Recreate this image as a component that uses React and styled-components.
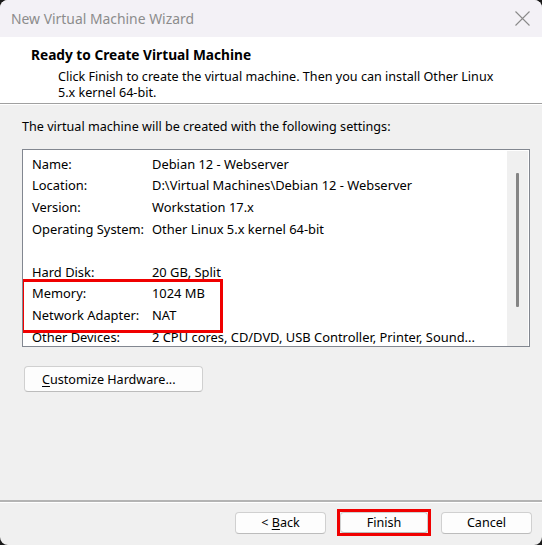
import React from "react";
import styled, { createGlobalStyle } from "styled-components";

const GlobalStyle = createGlobalStyle`
  html, body {
    margin: 0;
    padding: 0;
    background: #1a1a1a;
  }
  * {
    box-sizing: border-box;
  }
`;

const Window = styled.div`
  width: 542px;
  height: 545px;
  border-radius: 8px;
  overflow: hidden;
  background: #f0f0f0;
  display: flex;
  flex-direction: column;
  font-family: "Noto Sans", "Open Sans", sans-serif;
  font-size: 12.6px;
  color: #000;
`;

const TitleBar = styled.div`
  height: 37px;
  flex-shrink: 0;
  background: #f3f1f6;
  display: flex;
  align-items: center;
  justify-content: space-between;
  padding: 0 12px 1px 11px;
  color: #8c8c8c;
  font-size: 13.9px;
`;

const CloseIcon = styled.svg`
  width: 15px;
  height: 15px;
`;

const Header = styled.div`
  background: #fff;
  height: 67px;
  padding: 8px 20px 0 31px;
  border-bottom: 1px solid #a0a0a0;
  box-shadow: 0 1px 0 #fff;
`;

const HeaderTitle = styled.div`
  font-weight: bold;
  font-size: 13.7px;
  line-height: 20px;
`;

const HeaderText = styled.div`
  padding-left: 27px;
  line-height: 16px;
  margin-top: 4px;
`;

const Body = styled.div`
  flex: 1;
  padding: 13px 12px 0 22px;
`;

const Intro = styled.div`
  line-height: 20px;
`;

const ListBox = styled.div`
  margin-top: 12px;
  width: 508px;
  height: 198px;
  border: 1px solid #828790;
  background: #fff;
  display: flex;
`;

const Rows = styled.div`
  flex: 1;
  padding: 3px 0 0 9px;
  overflow: hidden;
  font-size: 12.9px;
`;

const Row = styled.div`
  display: flex;
  height: 21.6px;
  align-items: center;
  white-space: nowrap;
`;

const Label = styled.span`
  width: 120px;
  flex-shrink: 0;
`;

const Value = styled.span``;

const Highlight = styled.div`
  position: relative;
  &::after {
    content: "";
    position: absolute;
    left: -11px;
    top: -4px;
    width: 196px;
    height: 48px;
    border: 3px solid #f00000;
    pointer-events: none;
  }
`;

const ScrollTrack = styled.div`
  width: 21px;
  background: #f0f0f0;
  display: flex;
  justify-content: center;
  padding-top: 22px;
  margin-right: 1px;
  margin-top: 1px;
`;

const ScrollThumb = styled.div`
  width: 2.5px;
  height: 134px;
  background: #858585;
  border-radius: 1px;
`;

const Button = styled.button`
  font-family: inherit;
  font-size: inherit;
  color: #000;
  background: #fdfdfd;
  border: 1px solid #d0d0d0;
  border-bottom-color: #bcbcbc;
  border-radius: 4px;
  height: ${(p) => p.$h || 22}px;
  width: ${(p) => p.$w || 91}px;
  padding: 0;
  text-align: ${(p) => (p.$left ? "left" : "center")};
  padding-left: ${(p) => (p.$left ? "17px" : "0")};
`;

const Customize = styled.div`
  margin-top: 19px;
  margin-left: 2px;
`;

const Footer = styled.div`
  flex-shrink: 0;
  border-top: 2px solid #b4b4b4;
  box-shadow: inset 0 1px 0 #fff;
  padding: 7px 10px 9px 0;
  display: flex;
  justify-content: flex-end;
  align-items: center;
  gap: 6px;
`;

const Marked = styled.div`
  border: 3px solid #f00000;
  display: flex;
  margin: 0 4px 0 5px;
`;

const U = styled.span`
  text-decoration: underline;
  text-underline-offset: 2px;
`;

const settings = [
  ["Name:", "Debian 12 - Webserver"],
  ["Location:", "D:\\Virtual Machines\\Debian 12 - Webserver"],
  ["Version:", "Workstation 17.x"],
  ["Operating System:", "Other Linux 5.x kernel 64-bit"],
  ["", ""],
  ["Hard Disk:", "20 GB, Split"],
];

const marked = [
  ["Memory:", "1024 MB"],
  ["Network Adapter:", "NAT"],
];

const SettingRow = ({ label, value }) => (
  <Row>
    <Label>{label}</Label>
    <Value>{value}</Value>
  </Row>
);

const App = () => {
  return (
    <>
      <GlobalStyle />
      <Window>
        <TitleBar>
          <span>New Virtual Machine Wizard</span>
          <CloseIcon viewBox="0 0 15 15">
            <path d="M0.5 0.5 L14.5 14.5 M14.5 0.5 L0.5 14.5" stroke="#8a8a8a" strokeWidth="1.1" />
          </CloseIcon>
        </TitleBar>
        <Header>
          <HeaderTitle>Ready to Create Virtual Machine</HeaderTitle>
          <HeaderText>
            Click Finish to create the virtual machine. Then you can install Other Linux
            <br />
            5.x kernel 64-bit.
          </HeaderText>
        </Header>
        <Body>
          <Intro>The virtual machine will be created with the following settings:</Intro>
          <ListBox>
            <Rows>
              {settings.map(([l, v], i) => (
                <SettingRow key={i} label={l} value={v} />
              ))}
              <Highlight>
                {marked.map(([l, v]) => (
                  <SettingRow key={l} label={l} value={v} />
                ))}
              </Highlight>
              <SettingRow
                label="Other Devices:"
                value="2 CPU cores, CD/DVD, USB Controller, Printer, Sound..."
              />
            </Rows>
            <ScrollTrack>
              <ScrollThumb />
            </ScrollTrack>
          </ListBox>
          <Customize>
            <Button $w={179} $h={26} $left>
              <U>C</U>ustomize Hardware...
            </Button>
          </Customize>
        </Body>
        <Footer>
          <Button>
            &lt; <U>B</U>ack
          </Button>
          <Marked>
            <Button $w={88} $h={21}>Finish</Button>
          </Marked>
          <Button>Cancel</Button>
        </Footer>
      </Window>
    </>
  );
};

export default App;
